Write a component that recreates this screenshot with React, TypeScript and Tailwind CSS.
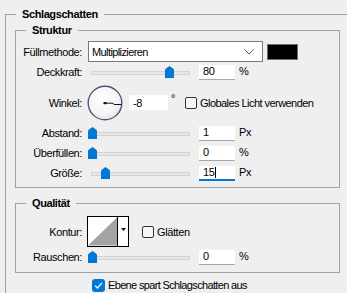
const font = { fontFamily: '"Liberation Sans", Arial, sans-serif' };

function Thumb({ left }: { left: number }) {
  return (
    <svg
      className="absolute top-0"
      style={{ left }}
      width="9"
      height="12"
      viewBox="0 0 9 12"
    >
      <path d="M0 4 Q0 3 1 2.4 L4.5 0 L8 2.4 Q9 3 9 4 V12 H0 Z" fill="#0078d7" />
    </svg>
  );
}

function Slider({ pos }: { pos: number }) {
  return (
    <div className="relative h-[12px] w-[105px] shrink-0">
      <div className="absolute left-[3px] right-[3px] top-[5px] h-[4px] border border-[#d4d4d4] bg-[#e6e6e6]" />
      <Thumb left={pos} />
    </div>
  );
}

function NumBox({ value, active }: { value: string; active?: boolean }) {
  return (
    <div
      className={
        active
          ? "flex h-[15px] w-[36px] shrink-0 items-center border-b-2 border-[#0078d7] bg-white pl-[4px] leading-none"
          : "flex h-[15px] w-[36px] shrink-0 items-center border-b border-[#a8a8a8] bg-white pl-[4px] leading-none"
      }
    >
      {value}
      {active && <span className="ml-[1px] h-[11px] w-px bg-black" />}
    </div>
  );
}

function Label({ children }: { children: string }) {
  return <div className="w-[66px] shrink-0 text-right">{children}</div>;
}

function SliderRow({ label, pos, value, unit, active }: { label: string; pos: number; value: string; unit: string; active?: boolean }) {
  return (
    <div className="flex h-[20px] items-center gap-[6px]">
      <Label>{label}</Label>
      <Slider pos={pos} />
      <NumBox value={value} active={active} />
      <span className="-ml-[2px] -mt-[3px]">{unit}</span>
    </div>
  );
}

function Dial() {
  return (
    <svg width="36" height="36" viewBox="0 0 36 36" className="-ml-[1px] shrink-0">
      <defs>
        <radialGradient id="dialfill" cx="0.45" cy="0.4" r="0.65">
          <stop offset="0" stopColor="#ffffff" />
          <stop offset="0.7" stopColor="#f4f4f4" />
          <stop offset="1" stopColor="#dcdcdc" />
        </radialGradient>
      </defs>
      <circle cx="18" cy="18" r="16.8" fill="url(#dialfill)" stroke="#4a5877" strokeWidth="1.4" />
      <rect x="16.5" y="17" width="3" height="2.2" fill="#111" />
      <path d="M18 18.2 H26 L27 19.5 H34.5" stroke="#111" strokeWidth="1" fill="none" />
    </svg>
  );
}

function Box({ checked }: { checked?: boolean }) {
  if (checked) {
    return (
      <div className="flex h-[13px] w-[13px] shrink-0 items-center justify-center rounded-[3px] bg-[#0078d7]">
        <svg width="9" height="9" viewBox="0 0 9 9">
          <path d="M1 4.6 L3.4 7 L8 1.8" stroke="#fff" strokeWidth="1.2" fill="none" />
        </svg>
      </div>
    );
  }
  return <div className="h-[12px] w-[12px] shrink-0 rounded-[2px] border border-[#333] bg-[#f7f7f7]" />;
}

export default function App() {
  return (
    <div className="h-[293px] w-[347px] overflow-hidden bg-[#efefef] text-[11px] leading-[14px] tracking-[-0.4px] text-black" style={font}>
      <fieldset className="ml-[5px] mt-[6px] w-[342px] border-l border-t border-[#a0a0a0]">
        <legend className="ml-[10px] px-[6px] font-bold leading-4">Schlagschatten</legend>

        <fieldset className="ml-[9px] w-[325px] border border-[#a0a0a0] pb-[4px]">
          <legend className="ml-[10px] px-[6px] font-bold leading-4">Struktur</legend>

          <div className="mt-[3px] flex h-[21px] items-center gap-[6px]">
            <Label>Füllmethode:</Label>
            <div className="flex h-[21px] w-[175px] shrink-0 items-center justify-between border border-[#7a7a7a] bg-white pl-[3px] pr-[8px]">
              <span className="tracking-[-0.6px]">Multiplizieren</span>
              <svg width="10" height="6" viewBox="0 0 10 6">
                <path d="M0.5 0.5 L5 5 L9.5 0.5" stroke="#555" strokeWidth="1" fill="none" />
              </svg>
            </div>
            <div className="-ml-[2px] h-[16px] w-[31px] border border-[#6e6e6e] bg-black" />
          </div>

          <SliderRow label="Deckkraft:" pos={77} value="80" unit="%" />

          <div className="flex h-[41px] items-center gap-[6px]">
            <Label>Winkel:</Label>
            <Dial />
            <div className="flex h-[15px] w-[39px] shrink-0 items-center bg-white pl-[4px]">-8</div>
            <span className="-ml-[3px] -mt-[10px]">°</span>
            <div className="ml-[4px] flex items-center gap-[3px]">
              <Box />
              <span className="tracking-[-0.55px]">Globales Licht verwenden</span>
            </div>
          </div>

          <SliderRow label="Abstand:" pos={0} value="1" unit="Px" />
          <SliderRow label="Überfüllen:" pos={0} value="0" unit="%" />
          <SliderRow label="Größe:" pos={13} value="15" unit="Px" active />
        </fieldset>

        <fieldset className="ml-[9px] mt-[7px] w-[325px] border border-[#a0a0a0] pb-[5px]">
          <legend className="ml-[10px] px-[6px] font-bold leading-4">Qualität</legend>

          <div className="mt-[5px] flex h-[31px] items-center gap-[6px]">
            <Label>Kontur:</Label>
            <div className="-ml-[1px] flex h-[31px] w-[42px] shrink-0 border border-black bg-white">
              <svg width="30" height="29" viewBox="0 0 30 29" className="shrink-0 border-r border-black">
                <path d="M0 29 L30 0 V29 Z" fill="#a3a3a3" />
              </svg>
              <div className="flex flex-1 items-center justify-center pb-[5px]">
                <svg width="5" height="3" viewBox="0 0 5 3">
                  <path d="M0 0 H5 L2.5 3 Z" fill="#111" />
                </svg>
              </div>
            </div>
            <div className="ml-[7px] flex items-center gap-[3px]">
              <Box />
              <span>Glätten</span>
            </div>
          </div>

          <SliderRow label="Rauschen:" pos={0} value="0" unit="%" />
        </fieldset>

        <div className="ml-[86px] flex h-[24px] items-center gap-[3px]">
          <Box checked />
          <span className="tracking-[-0.65px]">Ebene spart Schlagschatten aus</span>
        </div>
      </fieldset>
    </div>
  );
}
